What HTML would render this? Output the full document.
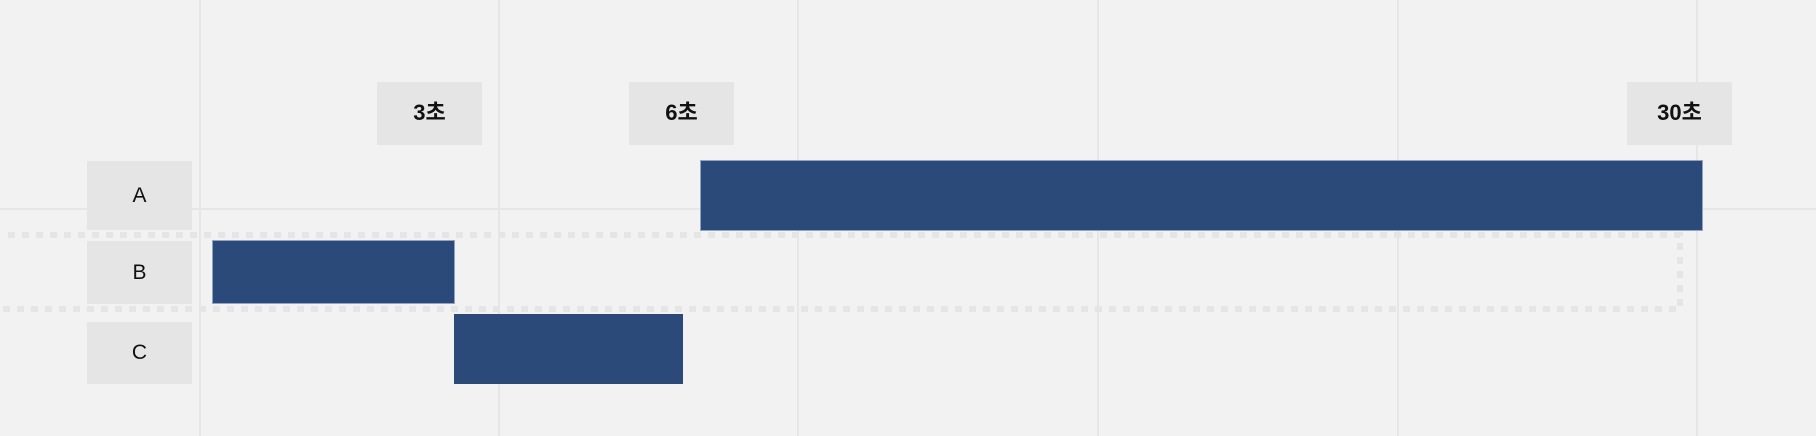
<!DOCTYPE html>
<html><head><meta charset="utf-8"><style>
body{margin:0;width:1816px;height:436px;background:#f2f2f2;position:relative;overflow:hidden;font-family:"Liberation Sans","Noto Sans CJK KR",sans-serif}
.v{position:absolute;top:0;height:436px;width:2px;background:#e6e6e6}
.h{position:absolute;left:0;width:1816px;height:2px;top:208px;background:#e6e6e6}
.box{position:absolute;background:#e5e5e5;display:flex;align-items:center;justify-content:center;color:#111}
.hd{font-weight:bold;font-size:22px;padding-bottom:6px;box-sizing:border-box}
.lb{font-size:21px}
.bar{position:absolute;background:#2b4a7a;box-sizing:border-box;border:1px solid #8fa3c4}
</style></head><body>
<div class="v" style="left:199px"></div>
<div class="v" style="left:498px"></div>
<div class="v" style="left:797px"></div>
<div class="v" style="left:1097px"></div>
<div class="v" style="left:1397px"></div>
<div class="v" style="left:1696px"></div>
<div class="h"></div>
<svg style="position:absolute;left:0;top:0" width="1816" height="436">
<path d="M8 235 H1680 V309 H0" fill="none" stroke="#e5e5e5" stroke-width="6" stroke-dasharray="7 7"/>
</svg>
<div class="box hd" style="left:377px;top:82px;width:105px;height:63px">3초</div>
<div class="box hd" style="left:629px;top:82px;width:105px;height:63px">6초</div>
<div class="box hd" style="left:1627px;top:82px;width:105px;height:63px">30초</div>
<div class="box lb" style="left:87px;top:161px;width:105px;height:69px">A</div>
<div class="box lb" style="left:87px;top:241px;width:105px;height:63px">B</div>
<div class="box lb" style="left:87px;top:322px;width:105px;height:62px">C</div>
<div class="bar" style="left:700px;top:160px;width:1003px;height:71px"></div>
<div class="bar" style="left:212px;top:240px;width:243px;height:64px"></div>
<div class="bar" style="left:454px;top:314px;width:229px;height:70px;border:none"></div>
</body></html>
